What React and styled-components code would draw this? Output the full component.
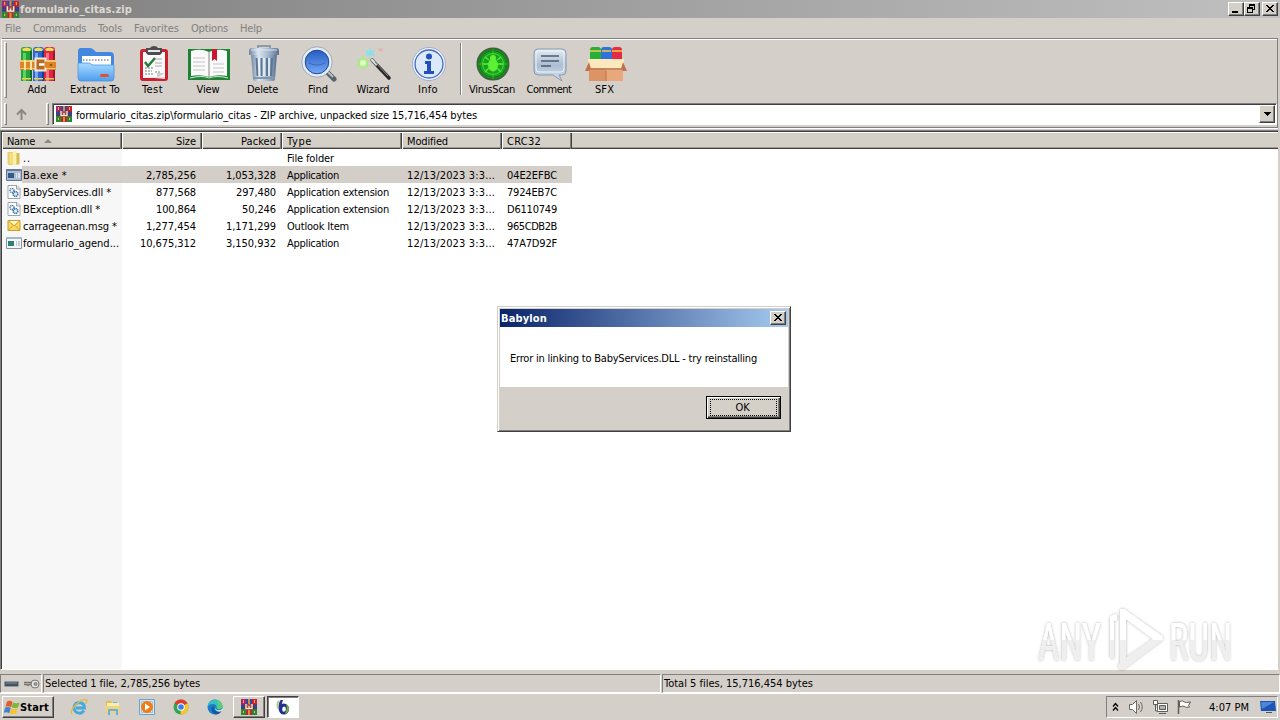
import { useLayoutEffect, useRef, useState } from "react";
import styled, { createGlobalStyle, css } from "styled-components";

const GlobalStyle = createGlobalStyle`
  * {
    box-sizing: border-box;
  }
  body {
    margin: 0;
    overflow: hidden;
    background: #d4d0c8;
    color: #000;
    font-family: "DejaVu Sans Condensed", "DejaVu Sans", sans-serif;
    font-stretch: condensed;
    font-size: 11px;
    line-height: 14px;
  }
  svg {
    display: block;
    flex: none;
  }
`;

const raised = css`
  border: 1px solid;
  border-color: #fff #404040 #404040 #fff;
  box-shadow: inset -1px -1px #808080;
`;

const sunken = css`
  border: 1px solid;
  border-color: #808080 #fff #fff #808080;
`;

const Screen = styled.div`
  position: relative;
  width: 1280px;
  height: 720px;
  display: flex;
  flex-direction: column;
  background: #d4cfc8;
`;

const TextBox = styled.span`
  display: inline-block;
  flex: none;
  white-space: pre;
  width: ${(p) => p.$width}px;
  padding-top: 2px;
  font-weight: ${(p) => (p.$bold ? 700 : 400)};
`;

// tracks the text so that it fills exactly the given width
function Text({ width, bold, children }) {
  const ref = useRef(null);
  const [spacing, setSpacing] = useState(0);

  useLayoutEffect(() => {
    const natural = ref.current.getBoundingClientRect().width;
    setSpacing((width - natural) / children.length);
  }, [width, children]);

  return (
    <TextBox $width={width} $bold={bold}>
      <span ref={ref} style={{ letterSpacing: spacing }}>
        {children}
      </span>
    </TextBox>
  );
}

const TitleBar = styled.header`
  height: 18px;
  display: flex;
  align-items: center;
  padding: 0 2px;
  gap: 1px;
  color: #dedad3;
  background: linear-gradient(90deg, #808080, #c0c0c0);
`;

const WindowButtons = styled.div`
  display: flex;
  margin-left: auto;
`;

const WindowButton = styled.button`
  ${raised}
  width: 16px;
  height: 14px;
  padding: 0 1px 1px 0;
  margin-left: ${(p) => (p.$gap ? 2 : 0)}px;
  background: #d4d0c8;
  display: flex;
  align-items: center;
  justify-content: center;
`;

const MenuBar = styled.nav`
  height: 20px;
  display: flex;
  align-items: center;
  gap: 12px;
  padding: 0 6px 0 5px;
  color: #808080;
`;

const Bars = styled.section`
  height: 90px;
  margin: 0 2px 0 1px;
  border: 1px solid;
  border-color: #808080 #808080 #808080 #fff;
  box-shadow: inset 0 1px #fff, 0 1px #fff;
`;

const Toolbar = styled.div`
  display: flex;
  height: 62px;
  padding: 3px 0 0 2px;
`;

const Grip = styled.i`
  width: 3px;
  height: ${(p) => p.$height}px;
  margin-right: ${(p) => p.$after}px;
  border: 1px solid;
  border-color: #fff #808080 #808080 #fff;
`;

const ToolButton = styled.div`
  width: ${(p) => p.$width}px;
  display: flex;
  flex-direction: column;
  align-items: center;
  padding-top: 3px;

  ${TextBox} {
    padding-top: 1px;
  }

  svg {
    margin-left: 2px;
  }
`;

const IconSlot = styled.div`
  height: 37px;
  display: flex;
  align-items: flex-end;
`;

const ToolSeparator = styled.i`
  width: 2px;
  height: 52px;
  margin: 1px 2px;
  border-left: 1px solid #808080;
  border-right: 1px solid #fff;
`;

const AddressBar = styled.div`
  display: flex;
  align-items: center;
  height: 26px;
  padding: 0 0 0 2px;
`;

const UpArrow = styled.div`
  width: 32px;
  padding-left: 2px;
`;

const AddressField = styled.div`
  ${sunken}
  box-shadow: inset 1px 1px #404040;
  flex: 1;
  height: 22px;
  display: flex;
  align-items: center;
  gap: 4px;
  background: #fff;
  padding: 1px 1px 1px 3px;

  ${TextBox} {
    padding-top: 4px;
  }
`;

const DropButton = styled.button`
  ${raised}
  width: 16px;
  height: 18px;
  padding: 0;
  margin-left: auto;
  background: #d4d0c8;
  display: flex;
  align-items: center;
  justify-content: center;
`;

const FileList = styled.main`
  height: 540px;
  margin: 2px 1px 0 0;
  border: 1px solid;
  border-color: #808080 #d4d0c8 #fff #808080;
  box-shadow: inset 1px 1px #404040;
  padding: 1px 0 0 1px;
  background: linear-gradient(90deg, #f7f7f7 121px, #fff 121px);
`;

const HeaderRow = styled.div`
  display: flex;
  height: 17px;
  background: #d4d0c8;
  border-top: 1px solid #fff;
  box-shadow: inset 0 -1px #404040, inset 0 -2px #a09c96;
`;

const HeaderCell = styled.div`
  width: ${(p) => p.$width}px;
  display: flex;
  align-items: center;
  justify-content: ${(p) => (p.$right ? "flex-end" : "flex-start")};
  gap: 9px;
  padding: 0 5px 0 4px;
  border-left: 1px solid #fff;
  border-right: 1px solid #404040;
  box-shadow: inset -1px 0 #808080;
`;

const FileRow = styled.div`
  display: flex;
  width: 570px;
  height: 17px;
  background: ${(p) =>
    p.$selected ? "linear-gradient(90deg, #f7f7f7 20px, #d4cec8 20px)" : "none"};
`;

const Cell = styled.div`
  width: ${(p) => p.$width}px;
  display: flex;
  align-items: center;
  justify-content: ${(p) => (p.$right ? "flex-end" : "flex-start")};
  gap: 1px;
  padding: 0 ${(p) => (p.$right ? 6 : 0)}px 0 ${(p) => (p.$icon ? 4 : 5)}px;

  svg {
    width: 16px;
  }
`;

const StatusBar = styled.footer`
  display: flex;
  height: 19px;
  margin-top: 4px;
`;

const StatusIcons = styled.div`
  ${sunken}
  width: 42px;
  display: flex;
  align-items: center;
  gap: 4px;
  padding-left: 3px;
`;

const StatusPanel = styled.div`
  ${sunken}
  width: ${(p) => (p.$width ? p.$width + "px" : "auto")};
  flex: ${(p) => (p.$width ? "none" : 1)};
  display: flex;
  align-items: flex-start;
  margin-left: 1px;
  padding: 0 1px;
`;

const Taskbar = styled.footer`
  height: 27px;
  margin-top: auto;
  border-top: 1px solid #fff;
  display: flex;
  align-items: flex-start;
  padding: 2px 2px 0;
`;

const StartButton = styled.button`
  ${raised}
  width: 52px;
  height: 22px;
  padding: 0;
  background: #d4d0c8;
  display: flex;
  align-items: center;
  color: #000;
  font: inherit;
`;

const QuickLaunch = styled.div`
  height: 22px;
  display: flex;
  align-items: center;
  gap: 16px;
  margin: 0 9px 0 16px;
`;

const TaskButton = styled.div`
  ${raised}
  width: 32px;
  height: 22px;
  margin-right: 2px;
  display: flex;
  align-items: center;
  justify-content: center;
  ${(p) =>
    p.$active &&
    css`
      background: #fff;
      border-color: #404040 #fff #fff #404040;
      box-shadow: inset 1px 1px #808080;
    `}
`;

const Tray = styled.div`
  ${sunken}
  width: 172px;
  height: 22px;
  margin-left: auto;
  display: flex;
  align-items: center;
  padding: 0 2px 0 4px;
  gap: 7px;
`;

const Clock = styled.div`
  display: flex;
  margin: 0 4px 0 9px;
`;

const Dialog = styled.div`
  position: absolute;
  left: 497px;
  top: 306px;
  width: 294px;
  height: 126px;
  border: 1px solid;
  border-color: #d4d0c8 #404040 #404040 #d4d0c8;
  box-shadow: inset 1px 1px #fff, inset -1px -1px #808080;
  padding: 2px;
  background: #d4cfc8;
`;

const DialogTitle = styled.div`
  height: 18px;
  display: flex;
  align-items: center;
  justify-content: space-between;
  padding: 0 2px 0 1px;
  color: #fff;
  background: linear-gradient(90deg, #0a246a, #a6caf0);
`;

const DialogBody = styled.div`
  height: 60px;
  display: flex;
  align-items: flex-start;
  padding: 23px 10px 0;
  background: #fff;
`;

const DialogActions = styled.div`
  display: flex;
  justify-content: flex-end;
  padding: 9px 7px 0;
`;

const OkButton = styled.button`
  width: 75px;
  height: 23px;
  padding: 2px 3px;
  border: 1px solid #000;
  background: #d4d0c8;
  box-shadow: inset 1px 1px #fff, inset -1px -1px #404040, inset -2px -2px #808080;
  color: #000;
  font: inherit;
`;

const FocusRing = styled.div`
  height: 17px;
  display: flex;
  align-items: center;
  justify-content: center;
  padding-right: 2px;
  border: 1px dotted #000;

  ${TextBox} {
    padding-top: 0;
  }
`;

const Watermark = styled.svg`
  position: absolute;
  left: 1030px;
  top: 604px;
`;

/* ---------- icons ---------- */

function RarIcon({ size = 16 }) {
  return (
    <svg width={size} height={size} viewBox="0 0 16 16">
      <path d="M0 0h5v6H0z" fill="#b02468" />
      <path d="M5 0h6v6H5z" fill="#2c47ae" />
      <path d="M11 0h5v6h-5z" fill="#c8202c" />
      <path d="M0 10h5v6H0z" fill="#2a8a32" />
      <path d="M5 10h6v6H5z" fill="#b32828" />
      <path d="M11 10h5v6h-5z" fill="#27853a" />
      <path d="M0 5.500h16v4.500H0z" fill="#5a3358" />
      <path d="M0 6h3v3H0zM13 6h3v3h-3z" fill="#29479a" />
      <path d="M7 0h2v5H7zM7 11h2v5H7z" fill="#de8a37" />
      <path d="M4 5h8v6H4z" fill="#a4544a" />
      <path d="M5 5v4.500h6V5M8 7v2" fill="none" stroke="#f6efe8" strokeWidth="1.200" />
      <path d="M2 1h1v3H2zM13 1h1v3h-1zM2 12h1v2H2zM13 12h1v2h-1z" fill="#e8b45c" />
    </svg>
  );
}

function Book({ x, light, main, dark }) {
  return (
    <g>
      <path d={`M${x} 4q0-3 3-3h5q3 0 3 3v31h-11z`} fill={main} />
      <path d={`M${x + 2} 7h3v28h-3z`} fill={light} />
      <path d={`M${x + 9} 5h2v30h-2z`} fill={dark} />
      <path d={`M${x + 1} 3q4.500-3 9 0l-1 2h-7z`} fill="#f2dc55" />
      <path d={`M${x + 1} 32h9v1.500h-9z`} fill="#ead14e" />
    </g>
  );
}

function AddIcon() {
  return (
    <svg width="36" height="36" viewBox="0 0 36 36">
      <Book x={1} light="#5fd260" main="#24a33a" dark="#126b27" />
      <Book x={13} light="#75a8ee" main="#2b66d0" dark="#173f94" />
      <Book x={24} light="#f57686" main="#e02640" dark="#a1142b" />
      <path d="M0 14h36v10H0z" fill="#d98528" />
      <path d="M0 14h36v2H0zM0 22h36v1H0z" fill="#f6c46d" />
      <path d="M4 14h2v10H4zM10 14h2v10h-2z" fill="#fbe2a2" />
      <path d="M15.500 12.500h10v12h-10z" fill="#b96a22" stroke="#f4e9d9" strokeWidth="2" />
      <path d="M19 18.500h7" stroke="#fff" strokeWidth="2.500" />
      <path d="M26 15.500v6" stroke="#d98528" strokeWidth="3" />
      <circle cx="31" cy="19" r="1" fill="#7d400f" />
    </svg>
  );
}

function ExtractIcon() {
  return (
    <svg width="38" height="36" viewBox="0 0 38 36">
      <defs>
        <linearGradient id="folder" x2="0" y2="1">
          <stop offset="0" stopColor="#a8dcff" />
          <stop offset="1" stopColor="#4d9def" />
        </linearGradient>
      </defs>
      <path d="M1 28V5q0-3 3-3h9q2 0 4 2l2 2h14q4 0 4 4v18z" fill="#4288e0" />
      <path d="M5 10h29v10H5z" fill="#fff" />
      <path d="M6 14h26" stroke="#9bacc0" strokeWidth="2" strokeDasharray="1.500 1.500" />
      <path
        d="M1 17h11l4 2h21v13q0 3-3 3H4q-3 0-3-3z"
        fill="url(#folder)"
        stroke="#4a94e2"
        strokeWidth=".8"
      />
      <rect x="23" y="28" width="9" height="3" rx="1.5" fill="#e1512f" />
    </svg>
  );
}

function TestIcon() {
  return (
    <svg width="30" height="36" viewBox="0 0 30 36">
      <rect x="1" y="3" width="28" height="32" rx="3" fill="#cd1f2f" />
      <path d="M4 6h22v26H4z" fill="#fafafa" />
      <path d="M7 2h4q1-2 4-2t4 2h4v5l-2 2H9L7 7z" fill="#4d4b50" />
      <path d="M9 4h12v2H9z" fill="#e8e8e8" />
      <path d="m6 16 3 4 7-8" fill="none" stroke="#247c35" strokeWidth="2.4" />
      <path d="M16 13h7M16 17h7M16 20h7" stroke="#aaa" />
      <path d="M6 25h7M6 28h8M6 22h9M16 26h6" stroke="#a9a9a9" strokeWidth="1.5" strokeDasharray="2 1" />
      <path d="M18 32v-5h8z" fill="#ccc" />
      <path d="m4 31 22 2v-2z" fill="#e1e1e1" />
    </svg>
  );
}

function ViewIcon() {
  return (
    <svg width="44" height="36" viewBox="0 0 44 36">
      <path d="M1 3h42v31H1z" fill="#1d8436" />
      <path d="M4 5q10-3 18 1v25q-8-3-18-1zM40 5q-10-3-18 1v25q8-3 18-1z" fill="#fafafa" />
      <path d="M3 32q12-3 19 0 8-3 19 0" fill="none" stroke="#d8e5d0" />
      <path
        d="M6 12h12M6 16h12M6 20h12M6 24h12M26 18h11M26 22h11M26 26h11"
        stroke="#c4c4c4"
      />
      <path d="M22 6v26" stroke="#999" strokeWidth="1.2" />
      <path d="M25 3h5v12l-2.500-2-2.500 2z" fill="#c9172e" />
    </svg>
  );
}

function DeleteIcon() {
  return (
    <svg width="32" height="38" viewBox="0 0 32 38">
      <defs>
        <linearGradient id="bin">
          <stop offset="0" stopColor="#6d84a3" />
          <stop offset=".3" stopColor="#dbe6f1" />
          <stop offset=".7" stopColor="#9db0c8" />
          <stop offset="1" stopColor="#566d8d" />
        </linearGradient>
      </defs>
      <path d="M10 4V2h12v2" fill="none" stroke="#8b9bac" strokeWidth="2" />
      <path d="M3 10h26l-2 25q0 2-3 2H8q-3 0-3-2z" fill="url(#bin)" />
      <path d="M8.500 14l1 18M13.500 14v18M19 14v18M24 14l-1 18" stroke="#5d7693" strokeWidth="2" />
      <path d="M11 14l.5 18M16 14v18M21 14v18" stroke="#edf3f8" strokeWidth="1.500" />
      <path d="M5 33h22v2H5z" fill="#8395ab" />
      <path d="M1 7q0-3 3-3h24q3 0 3 3v4H1z" fill="url(#bin)" />
      <path d="M3 6h26" stroke="#dce7f1" />
    </svg>
  );
}

function FindIcon() {
  return (
    <svg width="36" height="36" viewBox="0 0 36 36">
      <defs>
        <linearGradient id="lens" x2="0" y2="1">
          <stop offset="0" stopColor="#2157bd" />
          <stop offset="1" stopColor="#78aefa" />
        </linearGradient>
      </defs>
      <path d="m26 26 7 7" stroke="#59616a" strokeWidth="5" strokeLinecap="round" />
      <path d="m26 25 6 6" stroke="#b7c0ca" strokeWidth="2" />
      <circle cx="16" cy="16" r="13.500" fill="url(#lens)" stroke="#e4edf5" strokeWidth="3" />
      <circle cx="16" cy="16" r="15.200" fill="none" stroke="#788ba5" strokeWidth=".6" />
      <circle cx="16" cy="16" r="11.800" fill="none" stroke="#244b9a" />
      <path d="M8 17q8 4 16 0" fill="none" stroke="#386bc4" strokeWidth="1.200" />
    </svg>
  );
}

function WizardIcon() {
  return (
    <svg width="36" height="36" viewBox="0 0 36 36">
      <path d="m16 14 17 18" stroke="#292929" strokeWidth="3.600" strokeLinecap="round" />
      <path d="m15 13 6 6" stroke="#d7d7d7" strokeWidth="2.600" />
      <path d="m19 16 13 14" stroke="#8a8a8a" />
      <path d="m7 9 2 5 5-1-3 4 3 4-5-1-2 5-2-5-5 1 3-4-3-4 5 1z" fill="#a5ef7b" />
      <circle cx="7" cy="17" r="3" fill="#dcffc5" />
      <path d="m14 1 1 4 4-1-2 3 2 3-4-1-1 3-1-3-4 1 2-3-2-3 4 1z" fill="#86e2ec" />
      <path d="m24 1 1 2 3-1-2 2 1 2-3-1-2 1 1-2-2-2 3 1z" fill="#e9b1a8" />
    </svg>
  );
}

function InfoIcon() {
  return (
    <svg width="36" height="36" viewBox="0 0 36 36">
      <circle cx="18" cy="18" r="16.500" fill="#f0f5fc" stroke="#9eafd3" />
      <circle cx="18" cy="18" r="14" fill="#dce9fb" stroke="#4468bd" strokeWidth="1.300" />
      <circle cx="18" cy="10.500" r="3" fill="#2351bb" />
      <path d="M14 15h6v10h3v3H13v-3h3v-7h-2z" fill="#2351bb" />
    </svg>
  );
}

function VirusIcon() {
  return (
    <svg width="36" height="36" viewBox="0 0 36 36">
      <circle cx="18" cy="18" r="15.500" fill="#15a21c" stroke="#3c613b" strokeWidth="2" />
      <circle cx="18" cy="18" r="13.500" fill="none" stroke="#0b7814" />
      <circle cx="18" cy="18" r="10.500" fill="none" stroke="#4fd43d" />
      <path d="M18 3v30M3 18h30" stroke="#3ec935" strokeWidth=".7" />
      <path
        d="m14 14-4-3M22 14l4-3M13 18H8M23 18h5M14 22l-4 4M22 22l4 4"
        stroke="#62e83a"
        strokeWidth="1.300"
      />
      <ellipse cx="18" cy="19" rx="5" ry="6.500" fill="#5df035" />
      <circle cx="18" cy="12" r="3" fill="#5df035" />
    </svg>
  );
}

function CommentIcon() {
  return (
    <svg width="36" height="36" viewBox="0 0 36 36">
      <defs>
        <linearGradient id="bubble" x2="0" y2="1">
          <stop offset="0" stopColor="#e2ebf4" />
          <stop offset=".5" stopColor="#adbdd1" />
          <stop offset="1" stopColor="#d3e0ed" />
        </linearGradient>
      </defs>
      <path
        d="M6 3h24q4 0 4 4v18q0 4-4 4h-3l3 6-9-6H6q-4 0-4-4V7q0-4 4-4z"
        fill="url(#bubble)"
        stroke="#8799b0"
      />
      <rect x="4" y="5" width="28" height="21" rx="3" fill="none" stroke="#edf4fa" />
      <path d="M9 10h18M9 15h18M9 20h10" stroke="#4c5b6e" strokeWidth="1.600" />
    </svg>
  );
}

function SfxIcon() {
  return (
    <svg width="42" height="36" viewBox="0 0 42 36">
      <path d="M5 4q0-3 3-3h5q3 0 3 3v10H5z" fill="#28ae3b" />
      <path d="M16 4q0-3 3-3h5q3 0 3 3v10H16z" fill="#3270db" />
      <path d="M27 4q0-3 3-3h4q3 0 3 3v10H27z" fill="#e32b45" />
      <path d="M5 5h11M17 5h9M27 5h10" stroke="#f3cc43" strokeWidth="1.500" />
      <path d="M3 13h36v11H3z" fill="#fbe9bd" />
      <path d="M4 22h34v13H4z" fill="#dc9467" />
      <path d="M21 22h17v13H21z" fill="#e9a87b" />
      <path d="m4 16-4 9h4l2-2zM38 16l4 9h-4l-2-2z" fill="#bd724b" />
      <path d="M21 25v10" stroke="#b9724d" />
      <path d="M4 23h34" stroke="#bf7c57" strokeWidth="1.500" />
    </svg>
  );
}

function FolderIcon() {
  return (
    <svg width="15" height="16" viewBox="0 0 15 16">
      <path d="M1 2h6l1 1h2v12H2l-1-1z" fill="#e8cf67" />
      <path d="M7 1h3v14H6V3z" fill="#fbf0a6" />
      <path d="M10 3h3v11l-3 1z" fill="#d8bd50" />
      <path d="M3 3h2v11H3z" fill="#f4e28c" />
    </svg>
  );
}

function ExeIcon({ selected }) {
  return (
    <svg width="16" height="14" viewBox="0 0 16 14">
      <path
        d="M.5 1.500h15v11H.5z"
        fill={selected ? "#aebad0" : "#f4f6f8"}
        stroke={selected ? "#62769a" : "#8495aa"}
      />
      <path d="M0 1h16v2H0z" fill={selected ? "#667a9d" : "#a8b6c8"} />
      <path d="M2 5h6v5H2z" fill={selected ? "#2c5f83" : "#2d8074"} />
      <path d="M10 5h1v5h-1zM12 5h2v5h-2z" fill={selected ? "#dce3ed" : "#c3cbd4"} />
    </svg>
  );
}

function DllIcon() {
  return (
    <svg width="15" height="16" viewBox="0 0 15 16">
      <path d="M1.500 1.500h9l3 3v10h-12z" fill="#fff" stroke="#9aa3b0" />
      <path d="M10 1v4h4" fill="#dde4ee" stroke="#9aa3b0" />
      <circle cx="5.500" cy="6.500" r="2" fill="none" stroke="#5480ad" strokeWidth="1.600" strokeDasharray="1.200 .5" />
      <circle cx="9" cy="10" r="2.400" fill="#d9e9f7" stroke="#41719f" strokeWidth="1.600" strokeDasharray="1.200 .5" />
    </svg>
  );
}

function MsgIcon() {
  return (
    <svg width="15" height="14" viewBox="0 0 15 14">
      <path d="M1.500 1.500h12v10h-12z" fill="#f9d95f" stroke="#c79d2f" />
      <path d="m2 2 5.500 5L13 2M2 11l4-4M13 11 9 7" fill="none" stroke="#cf9f33" />
      <path d="m3 2 4.500 4L12 2z" fill="#fff7c8" />
    </svg>
  );
}

function WindowsLogo() {
  return (
    <svg width="17" height="17" viewBox="0 0 17 16">
      <path d="M4 2q3-1.500 5.500 .5L8 7.700Q5 6 2.500 7.200z" fill="#e8582a" />
      <path d="M10 3q3 1.500 6.500 0l-1.500 5q-3 1.300-6.500-.2z" fill="#7cb63b" />
      <path d="M2.200 8q3-1.300 5.500 .5L6.200 13.700Q3.500 12 .7 13.200z" fill="#3f82cf" />
      <path d="M8.200 9q3 1.500 6.500 .1l-1.500 5q-3 1.200-6.500-.3z" fill="#f6c231" />
    </svg>
  );
}

function IeIcon() {
  return (
    <svg width="18" height="18" viewBox="0 0 18 18">
      <path
        d="M14 12.500Q12 15.500 9 15.200 4 14.500 4 9.500 4.500 4.500 9.500 4.500q5 .5 5 5.500H6"
        fill="none"
        stroke="#43a9df"
        strokeWidth="2.800"
      />
      <path d="M2 16Q-.5 13 6 6.500T16.500 2q1 1.500-1.500 4" fill="none" stroke="#e2b93c" strokeWidth="1.300" />
    </svg>
  );
}

function ExplorerIcon() {
  return (
    <svg width="18" height="18" viewBox="0 0 18 18">
      <path d="M2 3h5l1 2h7v10H2z" fill="#dfbd52" />
      <path d="M3 5h12v5H3z" fill="#fbedaf" />
      <path d="M9 4h4v1H9z" fill="#5fb3e2" />
      <path d="M1 8h15l-1 7H2z" fill="#efd57a" />
      <path d="M4 17v-5q0-1 1-1h8q1 0 1 1v5h-2v-4H6v4z" fill="#66b1df" />
    </svg>
  );
}

function PlayerIcon() {
  return (
    <svg width="18" height="18" viewBox="0 0 18 18">
      <path d="M1.500 1.500h15v15h-15z" fill="#d5e7f4" stroke="#6ba2ce" />
      <path d="M3.500 3.500h11v11h-11z" fill="#eef6fb" stroke="#9cc5e2" />
      <circle cx="9" cy="9" r="6" fill="#ee7d16" />
      <path d="m7 5.500 5 3.500-5 3.500z" fill="#fff" />
    </svg>
  );
}

function ChromeIcon() {
  return (
    <svg width="18" height="18" viewBox="0 0 18 18">
      <circle cx="9" cy="9" r="7.500" fill="#31a551" />
      <path d="M9 9 2.500 5.200A7.500 7.500 0 0 1 15.500 5.300z" fill="#e23b2e" />
      <path d="M9 9l6.500-3.700A7.500 7.500 0 0 1 8.500 16.500z" fill="#f9c52c" />
      <circle cx="9" cy="9" r="3.800" fill="#fff" />
      <circle cx="9" cy="9" r="2.800" fill="#3c7ded" />
    </svg>
  );
}

function EdgeIcon() {
  return (
    <svg width="18" height="18" viewBox="0 0 18 18">
      <circle cx="9" cy="9" r="7.500" fill="#1a7ccb" />
      <path d="M1.600 8Q3 1.500 9 1.500q6.500.5 7.500 6.500 0 3-3.500 3.200-3 0-2.300-2Q10 6 6.500 6 3 6 1.600 9z" fill="#37bfc4" />
      <path d="M11 2q5 1.500 5.500 6 0 3-3.500 3.200-2 0-2.300-1Q13 7 11 2z" fill="#59ce77" />
      <path d="M8 8q-1 4 3 5.500 2.500.5 4.500-.5-2 3.500-6 3.500Q5 14 5.500 10z" fill="#125b9e" />
      <path d="M9.500 8.500q-1 3 2.500 3.700 3 .3 4.500-1.700v2q-2 1.500-4.500 1-4-1-2.500-5z" fill="#dce6e8" />
    </svg>
  );
}

function BabylonIcon() {
  return (
    <svg width="18" height="18" viewBox="0 0 18 18">
      <path d="M6.500 2q-3 5-1.500 10l3 4V11q-1-5 1-9z" fill="#27359a" />
      <path
        fillRule="evenodd"
        d="M10 5.500a5 5.300 0 1 1-.1 11 5 5.300 0 0 1 0-11zm.2 3q-2 .3-2 2.800t1.700 2.500q2-.3 2-2.800t-1.700-2.500z"
        fill="#23308f"
      />
      <path d="M12 6q4 2 3 6-1 3-4 4l1-3q1.500-3 0-7z" fill="#72aa4a" />
      <path d="M3.500 3Q1.500 7 3.500 11l1-1Q3.500 6 5.500 2z" fill="#a9cf7c" />
    </svg>
  );
}

function CloseGlyph() {
  return (
    <svg width="8" height="7" viewBox="0 0 8 7" shapeRendering="crispEdges">
      <path
        d="M0 0h2v1h1v1h2V1h1V0h2v1H7v1H6v1H5v1h1v1h1v1h1v1H6V6H5V5H3v1H2v1H0V6h1V5h1V4h1V3H2V2H1V1H0z"
        fill="#000"
      />
    </svg>
  );
}

/* ---------- data ---------- */

const menus = [
  ["File", 16],
  ["Commands", 53],
  ["Tools", 24],
  ["Favorites", 45],
  ["Options", 37],
  ["Help", 22],
];

const tools = [
  { label: "Add", text: 19, width: 54, Icon: AddIcon },
  { label: "Extract To", text: 50, width: 62, Icon: ExtractIcon },
  { label: "Test", text: 21, width: 53, Icon: TestIcon },
  { label: "View", text: 23, width: 58, Icon: ViewIcon },
  { label: "Delete", text: 31, width: 51, Icon: DeleteIcon },
  { label: "Find", text: 20, width: 60, Icon: FindIcon },
  { label: "Wizard", text: 33, width: 50, Icon: WizardIcon },
  { label: "Info", text: 20, width: 60, Icon: InfoIcon },
];

const extraTools = [
  { label: "VirusScan", text: 46, width: 56, Icon: VirusIcon },
  { label: "Comment", text: 45, width: 58, Icon: CommentIcon },
  { label: "SFX", text: 19, width: 53, Icon: SfxIcon },
];

const files = [
  { icon: <FolderIcon />, name: ["..", 8], type: ["File folder", 47] },
  {
    icon: <ExeIcon selected />,
    name: ["Ba.exe *", 44],
    size: ["2,785,256", 50],
    packed: ["1,053,328", 50],
    type: ["Application", 52],
    crc: "04E2EFBC",
    selected: true,
  },
  {
    icon: <DllIcon />,
    name: ["BabyServices.dll *", 88],
    size: ["877,568", 40],
    packed: ["297,480", 40],
    type: ["Application extension", 102],
    crc: "7924EB7C",
  },
  {
    icon: <DllIcon />,
    name: ["BException.dll *", 77],
    size: ["100,864", 40],
    packed: ["50,246", 34],
    type: ["Application extension", 102],
    crc: "D6110749",
  },
  {
    icon: <MsgIcon />,
    name: ["carrageenan.msg *", 94],
    size: ["1,277,454", 50],
    packed: ["1,171,299", 50],
    type: ["Outlook Item", 62],
    crc: "965CDB2B",
  },
  {
    icon: <ExeIcon />,
    name: ["formulario_agend...", 96],
    size: ["10,675,312", 56],
    packed: ["3,150,932", 50],
    type: ["Application", 52],
    crc: "47A7D92F",
  },
];

function Tool({ label, text, width, Icon }) {
  return (
    <ToolButton $width={width}>
      <IconSlot>
        <Icon />
      </IconSlot>
      <Text width={text}>{label}</Text>
    </ToolButton>
  );
}

function MessageBox() {
  return (
    <Dialog>
      <DialogTitle>
        <Text width={46} bold>
          Babylon
        </Text>
        <WindowButton>
          <CloseGlyph />
        </WindowButton>
      </DialogTitle>
      <DialogBody>
        <Text width={247}>Error in linking to BabyServices.DLL - try reinstalling</Text>
      </DialogBody>
      <DialogActions>
        <OkButton>
          <FocusRing>
            <Text width={14}>OK</Text>
          </FocusRing>
        </OkButton>
      </DialogActions>
    </Dialog>
  );
}

function AnyRunMark() {
  return (
    <Watermark width="250" height="72" viewBox="0 0 250 72">
      <defs>
        <linearGradient id="mark" gradientUnits="userSpaceOnUse" x1="0" y1="0" x2="0" y2="72">
          <stop offset=".5" stopColor="#fff" />
          <stop offset=".5" stopColor="#efefef" />
        </linearGradient>
        <filter id="glow" x="-10%" y="-10%" width="120%" height="120%">
          <feDropShadow dx="0" dy="0" stdDeviation="1.500" floodColor="#000" floodOpacity=".32" />
        </filter>
      </defs>
      <g filter="url(#glow)" fill="url(#mark)">
        <text x="8" y="56" fontFamily="Roboto" fontSize="52" textLength="63" lengthAdjust="spacingAndGlyphs">
          ANY
        </text>
        <text x="139" y="56" fontFamily="Roboto" fontSize="52" textLength="63" lengthAdjust="spacingAndGlyphs">
          RUN
        </text>
        <path d="M87 10v6l-3 1v38l-4-2V15q0-3 3-4z" />
        <path
          fillRule="evenodd"
          d="M90 5l4 0 38 27q2 3-1 5L94 65q-5 2-6-3l2-3zM96 15v39l27-19z"
        />
      </g>
    </Watermark>
  );
}

export default function App() {
  return (
    <Screen>
      <GlobalStyle />
      <TitleBar>
        <RarIcon size={17} />
        <Text width={112} bold>
          formulario_citas.zip
        </Text>
        <WindowButtons>
          <WindowButton>
            <svg width="8" height="8">
              <path d="M0 6h6v2H0z" />
            </svg>
          </WindowButton>
          <WindowButton>
            <svg width="9" height="9" shapeRendering="crispEdges">
              <path d="M2 0h6v6H6V5h1V2H3v1H2zM0 3h6v6H0zM1 5v3h4V5z" fillRule="evenodd" />
            </svg>
          </WindowButton>
          <WindowButton $gap>
            <CloseGlyph />
          </WindowButton>
        </WindowButtons>
      </TitleBar>

      <MenuBar>
        {menus.map(([label, width]) => (
          <Text key={label} width={width}>
            {label}
          </Text>
        ))}
      </MenuBar>

      <Bars>
        <Toolbar>
          <Grip $height={56} $after={3} />
          {tools.map((tool) => (
            <Tool key={tool.label} {...tool} />
          ))}
          <ToolSeparator />
          {extraTools.map((tool) => (
            <Tool key={tool.label} {...tool} />
          ))}
        </Toolbar>
        <AddressBar>
          <Grip $height={22} $after={7} />
          <UpArrow>
            <svg width="11" height="12" fill="none" stroke="#8b8883" strokeWidth="2">
              <path d="M5.500 12V2M1 6.500 5.500 2 10 6.500" />
            </svg>
          </UpArrow>
          <Grip $height={22} $after={3} />
          <AddressField>
            <RarIcon />
            <Text width={401}>
              formulario_citas.zip\formulario_citas - ZIP archive, unpacked size 15,716,454 bytes
            </Text>
            <DropButton>
              <svg width="7" height="4" shapeRendering="crispEdges">
                <path d="M0 0h7v1H6v1H5v1H4v1H3V3H2V2H1V1H0z" />
              </svg>
            </DropButton>
          </AddressField>
        </AddressBar>
      </Bars>

      <FileList>
        <HeaderRow>
          <HeaderCell $width={120}>
            <Text width={28}>Name</Text>
            <svg width="8" height="4">
              <path d="M0 4 4 0l4 4z" fill="#8c8984" />
            </svg>
          </HeaderCell>
          <HeaderCell $width={80} $right>
            <Text width={20}>Size</Text>
          </HeaderCell>
          <HeaderCell $width={80} $right>
            <Text width={35}>Packed</Text>
          </HeaderCell>
          <HeaderCell $width={120}>
            <Text width={25}>Type</Text>
          </HeaderCell>
          <HeaderCell $width={100}>
            <Text width={41}>Modified</Text>
          </HeaderCell>
          <HeaderCell $width={70}>
            <Text width={34}>CRC32</Text>
          </HeaderCell>
        </HeaderRow>
        {files.map(({ icon, name, size, packed, type, crc, selected }) => (
          <FileRow key={name[0]} $selected={selected}>
            <Cell $width={120} $icon>
              {icon}
              <Text width={name[1]}>{name[0]}</Text>
            </Cell>
            <Cell $width={80} $right>
              {size && <Text width={size[1]}>{size[0]}</Text>}
            </Cell>
            <Cell $width={80} $right>
              {packed && <Text width={packed[1]}>{packed[0]}</Text>}
            </Cell>
            <Cell $width={120}>
              <Text width={type[1]}>{type[0]}</Text>
            </Cell>
            <Cell $width={100}>{crc && <Text width={88}>12/13/2023 3:3...</Text>}</Cell>
            <Cell $width={70}>{crc && <Text width={50}>{crc}</Text>}</Cell>
          </FileRow>
        ))}
      </FileList>

      <StatusBar>
        <StatusIcons>
          <svg width="15" height="8">
            <rect x=".5" y="1.500" width="14" height="5" rx="1" fill="#46525e" stroke="#8c979f" />
            <path d="M2 3h11" stroke="#85929e" />
          </svg>
          <svg width="17" height="10" fill="none" stroke="#77756f">
            <path d="M1 3.500h8M1 5.500h3l1 1 1-1h3" fill="#eee" strokeWidth="1.500" />
            <circle cx="12" cy="5" r="4" fill="#e9e8e4" />
            <circle cx="12.500" cy="5" r="1.500" fill="#aaa" />
          </svg>
        </StatusIcons>
        <StatusPanel $width={618}>
          <Text width={155}>Selected 1 file, 2,785,256 bytes</Text>
        </StatusPanel>
        <StatusPanel>
          <Text width={149}>Total 5 files, 15,716,454 bytes</Text>
        </StatusPanel>
      </StatusBar>

      <Taskbar>
        <StartButton>
          <WindowsLogo />
          <Text width={29} bold>
            Start
          </Text>
        </StartButton>
        <QuickLaunch>
          <IeIcon />
          <ExplorerIcon />
          <PlayerIcon />
          <ChromeIcon />
          <EdgeIcon />
        </QuickLaunch>
        <TaskButton>
          <RarIcon />
        </TaskButton>
        <TaskButton $active>
          <BabylonIcon />
        </TaskButton>
        <Tray>
          <svg width="10" height="10" fill="none" stroke="#000" strokeWidth="1.300">
            <path d="m2 4.500 2.500-3 2.500 3M2 8.500l2.500-3 2.500 3" />
          </svg>
          <svg width="17" height="16" fill="none" stroke="#6b6965">
            <path d="M1.500 5.500h3l4-4v13l-4-4h-3z" fill="#fff" />
            <path d="M10.500 5q2 3 0 6M12.500 3q3.500 5 0 10" />
          </svg>
          <svg width="17" height="16" fill="none" stroke="#5f5d59">
            <path d="M5.500 4.500h10v8h-10z" fill="#fff" />
            <path d="M7.500 6.500h6v4h-6z" fill="#b5b2ad" />
            <path d="M7 14.500h7M1.500 1.500h4v4h-4zM3.500 6v6h2" fill="#fff" />
          </svg>
          <svg width="17" height="16" fill="none" stroke="#5f5d59">
            <path d="M2.500 1v14" strokeWidth="1.500" />
            <path d="M3.500 2.500q3-1.500 5 .5 1 1 6 0l-2 3.500 1 1.500q-4 1-5-.5-2-1-5 .5z" fill="#fff" />
          </svg>
          <Clock>
            <Text width={40}>4:07 PM</Text>
          </Clock>
          <svg width="16" height="14">
            <path d="M0 1h15l1 10H1z" fill="#1d55b4" />
            <path d="M1 2h13L2 9z" fill="#4c86d8" />
            <path d="M6 12h6v1H6z" fill="#555" />
          </svg>
        </Tray>
      </Taskbar>

      <AnyRunMark />
      <MessageBox />
    </Screen>
  );
}
